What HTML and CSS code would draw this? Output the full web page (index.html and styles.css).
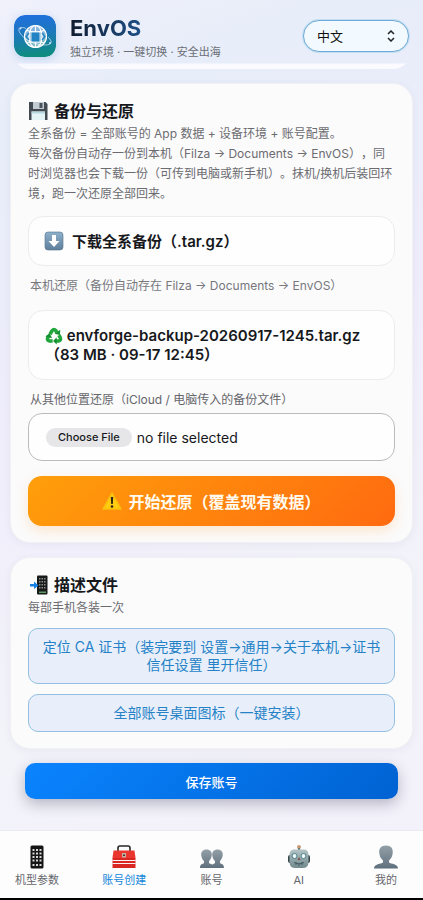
FILE: index.html
```html
<!DOCTYPE html>
<html lang="zh-CN">
<head>
  <meta charset="UTF-8">
  <meta name="viewport" content="width=device-width, initial-scale=1.0">
  <title>EnvOS</title>
  <link rel="stylesheet" href="styles.css">
</head>
<body>
  <header class="topbar">
    <svg class="logo" viewBox="0 0 42 42" aria-hidden="true">
      <defs>
        <linearGradient id="logoBg" x1="0" y1="0" x2="0.1" y2="1">
          <stop offset="0" stop-color="#1f6fe0"/>
          <stop offset="0.5" stop-color="#1c78ba"/>
          <stop offset="1" stop-color="#0f8c80"/>
        </linearGradient>
      </defs>
      <rect width="42" height="42" rx="11" fill="url(#logoBg)"/>
      <circle cx="21.5" cy="21.5" r="11" fill="#fff" fill-opacity="0.45" stroke="#fff" stroke-width="1.2"/>
      <g fill="none" stroke="#fff" stroke-width="1.2">
        <ellipse cx="21.5" cy="21.5" rx="6.500" ry="11"/>
        <path d="M21.500 10.500v22M13 15.500q8.500 3 17 0M13 28q8.500-3 17 0"/>
        <path d="M17 17h9v10h-9z" fill="#2182c4" stroke-width="0.800"/>
        <path d="M15 18l-3 3.500 3 3.500M28 18l3 3.500-3 3.500" stroke="#2182c4"/>
        <path d="M12 13.500C6 11 3 13 6 18c4 7 15 12 25 12 7 0 8-3 3-8" stroke-width="0.600"/>
      </g>
      <circle cx="6.500" cy="13.500" r="1" fill="#bfe4ff"/>
      <circle cx="36" cy="28" r="1" fill="#bfe4ff"/>
    </svg>
    <div class="brand">
      <h1 class="brand-name">EnvOS</h1>
      <p class="brand-sub">独立环境 · 一键切换 · 安全出海</p>
    </div>
    <div class="lang">
      <select class="lang-select" aria-label="语言">
        <option>中文</option>
      </select>
      <svg class="lang-arrow" viewBox="0 0 8 12" aria-hidden="true">
        <path d="M1 4l3-3 3 3M1 8l3 3 3-3"/>
      </svg>
    </div>
  </header>

  <main class="content">
    <section class="card">
      <h2 class="card-title">
        <svg class="icon" viewBox="0 0 20 20" aria-hidden="true">
          <path d="M1 1h16.500L19.500 3v16H1z" fill="#434a52"/>
          <path d="M5 1h11v7H5z" fill="#c3ccd2"/>
          <path d="M11.500 2h3v5h-3z" fill="#4a535b"/>
          <path d="M3.500 10.500h13.500V19H3.500z" fill="#e4f3f6"/>
          <path d="M3.500 10.500h13.500v2H3.500z" fill="#b5d7df"/>
        </svg>
        备份与还原
      </h2>
      <p class="desc">全系备份 = 全部账号的 App 数据 + 设备环境 + 账号配置。<br>每次备份自动存一份到本机（Filza → Documents → EnvOS），同时浏览器也会下载一份（可传到电脑或新手机）。抹机/换机后装回环境，跑一次还原全部回来。</p>

      <button class="btn-plain btn-download" type="button">
        <svg class="icon" viewBox="0 0 20 20" aria-hidden="true">
          <defs>
            <linearGradient id="downBg" x1="0" y1="0" x2="0" y2="1">
              <stop offset="0" stop-color="#8db0cb"/>
              <stop offset="1" stop-color="#5e7f9c"/>
            </linearGradient>
          </defs>
          <rect x="1" y="1" width="18" height="18" rx="3" fill="url(#downBg)" stroke="#56728b" stroke-width="0.600"/>
          <path d="M8 4h4v6h3.500L10 16l-5.500-6H8z" fill="#fff"/>
        </svg>
        <span>下载全系备份（.tar.gz）</span>
      </button>

      <p class="label">本机还原（备份自动存在 Filza → Documents → EnvOS）</p>

      <button class="btn-plain btn-backup" type="button">
        <svg class="icon-inline" viewBox="0 0 20 20" aria-hidden="true">
          <g fill="none" stroke="#20a63a" stroke-width="4">
            <path d="M5.500 8L8 4q2-2.500 4 0l1 2"/>
            <path d="M15.500 9l1.500 3q1 3-2 3.500h-3"/>
            <path d="M8.500 15.500H5q-3-0.500-2-3.500l1-2"/>
          </g>
          <path d="M10.500 7.500l6 1.500L17 3z" fill="#149030"/>
          <path d="M13 11.500v8l-4-4z" fill="#149030"/>
          <path d="M0.500 10.500L5 7l3 5.500z" fill="#149030"/>
        </svg>
        envforge-backup-20260917-1245.tar.gz（83 MB · 09-17 12:45）
      </button>

      <label class="label label-file" for="backup-file">从其他位置还原（iCloud / 电脑传入的备份文件）</label>
      <div class="file-box">
        <input class="file-input" type="file" id="backup-file">
        <span class="file-btn">Choose File</span>
        <span class="file-name">no file selected</span>
      </div>

      <button class="btn-restore" type="button">
        <svg class="icon" viewBox="0 0 20 20" aria-hidden="true">
          <path d="M10 2L19 18H1z" fill="#ffcc12" stroke="#fbbd0d" stroke-width="1.500" stroke-linejoin="round"/>
          <path d="M8.800 6h2.400l-0.400 7H9.200z" fill="#2b2413"/>
          <circle cx="10" cy="15.500" r="1.300" fill="#2b2413"/>
        </svg>
        <span>开始还原（覆盖现有数据）</span>
      </button>
    </section>

    <section class="card card-profile">
      <h2 class="card-title">
        <svg class="icon" viewBox="0 0 20 20" aria-hidden="true">
          <rect x="9" y="0.500" width="10.500" height="19" rx="1" fill="#17191b"/>
          <g fill="#8d8f84">
            <path d="M11 3h1.500v1.500H11zM13.500 3H15v1.500h-1.500zM16 3h1.500v1.500H16z"/>
            <path d="M11 6h1.500v1.500H11zM13.500 6H15v1.500h-1.500zM16 6h1.500v1.500H16z"/>
            <path d="M11 9h1.500v1.500H11zM13.500 9H15v1.500h-1.500zM16 9h1.500v1.500H16z"/>
            <path d="M11 12h1.500v1.500H11zM13.500 12H15v1.500h-1.500zM16 12h1.500v1.500H16z"/>
          </g>
          <path d="M11 16.500h7V18h-7z" fill="#5c9a62"/>
          <path d="M2 9h4V6.500l4.500 4L6 14v-2.500H2z" fill="#1682e6"/>
        </svg>
        描述文件
      </h2>
      <p class="desc">每部手机各装一次</p>
      <a class="link-btn" href="#cert">定位 CA 证书（装完要到 设置→通用→关于本机→证书信任设置 里开信任）</a>
      <a class="link-btn" href="#icons">全部账号桌面图标（一键安装）</a>
    </section>

    <button class="btn-save" type="button">保存账号</button>
  </main>

  <nav class="tabbar">
    <a class="tab" href="#device">
      <svg class="tab-icon" viewBox="0 0 24 24" aria-hidden="true">
        <rect x="5.500" y="0.500" width="13" height="23" rx="1.500" fill="#151515"/>
        <g fill="#d7d7d7">
          <path d="M7.500 4h2v2h-2zM11 4h2v2h-2zM14.500 4h2v2h-2z"/>
          <path d="M7.500 7.500h2v2h-2zM11 7.500h2v2h-2zM14.500 7.500h2v2h-2z"/>
          <path d="M7.500 11h2v2h-2zM11 11h2v2h-2zM14.500 11h2v2h-2z"/>
          <path d="M7.500 14.500h2v2h-2zM11 14.500h2v2h-2zM14.500 14.500h2v2h-2z"/>
          <path d="M7.500 19h2v2h-2zM11 19h2v2h-2zM14.500 19h2v2h-2z"/>
        </g>
      </svg>
      <span>机型参数</span>
    </a>
    <a class="tab tab-active" href="#create">
      <svg class="tab-icon" viewBox="0 0 24 24" aria-hidden="true">
        <path d="M6 6V3q0-2 2-2h8q2 0 2 2v3" fill="none" stroke="#272727" stroke-width="1.600"/>
        <path d="M1.500 5.500h21l1 7.500H0.500z" fill="#e9372f"/>
        <path d="M0.500 13h23v10H0.500z" fill="#d92823"/>
        <path d="M0.500 15.500h23M0.500 18.500h23" stroke="#fff1ee" stroke-width="1"/>
        <rect x="10" y="8" width="4" height="4.500" fill="#c9b0a4"/>
        <path d="M11 9.500h2v1.500h-2z" fill="#4e302c"/>
      </svg>
      <span>账号创建</span>
    </a>
    <a class="tab" href="#accounts">
      <svg class="tab-icon" viewBox="0 0 24 24" aria-hidden="true">
        <defs>
          <linearGradient id="person" x1="0" y1="0" x2="0" y2="1">
            <stop offset="0" stop-color="#94a0a8"/>
            <stop offset="1" stop-color="#5f707d"/>
          </linearGradient>
        </defs>
        <path d="M17.500 4.500c3.800 0 5.700 2.400 5.200 6-.4 2.600-1.600 4.500-2.700 5.500v2c1.500 1.200 4 .8 4 5H11.500c0-4.200 2-3.800 3.500-5v-2c-1.500-1-2.300-2.900-2.700-5.500-.5-3.600 1.400-6 5.200-6z" fill="url(#person)"/>
        <path d="M6.500 4.500c3.800 0 5.700 2.400 5.200 6C11.300 13.100 10.500 15 9 16v2c1.500 1.200 4.500.8 4.500 5H0c0-4.200 2.500-3.800 4-5v-2c-1.500-1-2.300-2.900-2.700-5.500-.5-3.600 1.400-6 5.200-6z" fill="url(#person)"/>
      </svg>
      <span>账号</span>
    </a>
    <a class="tab" href="#ai">
      <svg class="tab-icon" viewBox="0 0 24 24" aria-hidden="true">
        <defs>
          <linearGradient id="robot" x1="0" y1="0" x2="0" y2="1">
            <stop offset="0" stop-color="#b3c3c5"/>
            <stop offset="1" stop-color="#71898d"/>
          </linearGradient>
        </defs>
        <circle cx="12" cy="2" r="2" fill="#c99a78"/>
        <path d="M11 3h2v3h-2z" fill="#69777b"/>
        <rect x="1" y="10" width="22" height="8" rx="2" fill="#35464a"/>
        <path d="M7 4.500h10q4 0 4.500 5V17q0 6-6 6h-7q-6 0-6-6V9.500q.5-5 4.500-5z" fill="url(#robot)"/>
        <circle cx="7.500" cy="11" r="2.500" fill="#effafa" stroke="#4c7d89"/>
        <circle cx="16.500" cy="11" r="2.500" fill="#effafa" stroke="#4c7d89"/>
        <path d="M12 12l1.500 3h-3z" fill="#7d4f49"/>
        <path d="M7 17.500q5 3 10 0M9 17v3M12 18v3M15 17v3" fill="none" stroke="#435b60"/>
      </svg>
      <span>AI</span>
    </a>
    <a class="tab" href="#me">
      <svg class="tab-icon" viewBox="0 0 24 24" aria-hidden="true">
        <path d="M12 .5c5 0 7.300 3 6.700 7.500-.4 3.500-1.700 5.700-3.700 7.500v2c2 1.500 9 1.300 9 6H0c0-4.700 7-4.500 9-6v-2C7 13.700 5.700 11.500 5.300 8 4.700 3.500 7 .5 12 .5z" fill="url(#person)"/>
      </svg>
      <span>我的</span>
    </a>
  </nav>
</body>
</html>
```
FILE: styles.css
```css
* {
  box-sizing: border-box;
}

body {
  margin: 0;
  min-height: 100vh;
  display: flex;
  flex-direction: column;
  font-family: Inter, "Noto Sans CJK SC", sans-serif;
  text-spacing-trim: space-all;
  color: #16181c;
  background: linear-gradient(160deg, #f0f1fb, #e7edf9 12%, #efedfb 40%, #f3f3fa 70%, #f3f1fb);
}

h1, h2, p {
  margin: 0;
}

button, select {
  font-family: inherit;
}

.topbar {
  display: flex;
  align-items: center;
  gap: 14px;
  height: 69px;
  margin: 0 12px;
  padding: 8px 2px 5px;
  background: linear-gradient(transparent 63px, #fbfbff 64px);
  border-radius: 0 0 18px 18px;
}

.logo {
  width: 42px;
  height: 42px;
  border-radius: 11px;
  box-shadow: 0 2px 8px rgba(60, 130, 220, 0.25);
}

.brand {
  flex: 1;
  padding-top: 3px;
}

.brand-name {
  font-size: 22px;
  line-height: 28px;
  font-weight: 700;
  width: max-content;
  color: transparent;
  background: linear-gradient(90deg, #101c30, #1d4f86);
  background-clip: text;
}

.brand-sub {
  font-size: 11px;
  line-height: 20px;
  color: #6b6e76;
}

.lang {
  display: grid;
  align-items: center;
  width: 106px;
}

.lang-select {
  grid-area: 1 / 1;
  height: 32px;
  padding: 0 13px;
  font-size: 13px;
  color: #111;
  appearance: none;
  background: #f3faff;
  border: 1px solid #70a9d4;
  border-radius: 16px;
  box-shadow: 0 0 0 1px #c3dff2;
}

.lang-arrow {
  grid-area: 1 / 1;
  justify-self: end;
  width: 8px;
  height: 12px;
  margin-right: 14px;
  fill: none;
  stroke: #222;
  stroke-width: 1.5;
  pointer-events: none;
}

.content {
  display: flex;
  flex-direction: column;
  gap: 14px;
  padding: 14px 10px 0;
}

.card {
  display: flex;
  flex-direction: column;
  padding: 15px 17px 16px;
  background: #fbfbfc;
  border: 1px solid #f1f1f5;
  border-radius: 20px;
  box-shadow: 0 2px 8px rgba(60, 60, 100, 0.06);
}

.card-title {
  display: flex;
  align-items: center;
  gap: 6px;
  font-size: 16px;
  line-height: 24px;
  font-weight: 700;
}

.icon {
  width: 20px;
  height: 20px;
  flex: none;
}

.desc {
  margin-top: 1px;
  font-size: 12px;
  line-height: 20px;
  color: #6b6b70;
}

.btn-plain {
  color: #16181c;
  font-size: 15px;
  line-height: 19px;
  font-weight: 600;
  text-align: left;
  background: #fefefe;
  border: 1px solid #ececef;
  border-radius: 15px;
  cursor: pointer;
}

.btn-download {
  display: flex;
  align-items: center;
  gap: 8px;
  height: 50px;
  margin-top: 12px;
  padding: 0 15px;
}

.btn-backup {
  margin-top: 14px;
  padding: 15px 16px;
}

.icon-inline {
  width: 18px;
  height: 18px;
  vertical-align: -4px;
}

.label {
  margin-top: 10px;
  padding-left: 2px;
  font-size: 12px;
  line-height: 20px;
  color: #77777c;
}

.label-file {
  color: #66666b;
}

.file-box {
  position: relative;
  display: flex;
  align-items: center;
  gap: 5px;
  height: 48px;
  margin-top: 3px;
  padding: 0 17px;
  background: #fefefe;
  border: 1px solid #bcbcbf;
  border-radius: 14px;
}

/* real input covers the whole box */
.file-input {
  position: absolute;
  inset: 0;
  width: 100%;
  height: 100%;
  opacity: 0;
  cursor: pointer;
}

.file-btn {
  padding: 0 12px;
  font-size: 11px;
  line-height: 19px;
  font-weight: 500;
  background: #e6e6e8;
  border-radius: 10px;
}

.file-name {
  font-size: 14px;
}

.btn-restore {
  display: flex;
  align-items: center;
  justify-content: center;
  gap: 6px;
  height: 50px;
  margin-top: 15px;
  font-size: 16px;
  font-weight: 700;
  color: #fffbee;
  background: linear-gradient(135deg, #ff9f0a, #ff6a10);
  border: none;
  border-radius: 14px;
  box-shadow: 0 5px 14px rgba(255, 150, 30, 0.2);
  cursor: pointer;
}

.link-btn {
  margin-top: 10px;
  padding: 9px 12px;
  font-size: 14px;
  line-height: 18px;
  text-align: center;
  text-decoration: none;
  color: #2582c6;
  background: #e8effb;
  border: 1px solid #92bfe2;
  border-radius: 10px;
}

.btn-save {
  height: 36px;
  margin: 0 15px;
  font-size: 13px;
  font-weight: 500;
  color: #fff;
  background: linear-gradient(135deg, #0a84ff, #0062d2);
  border: none;
  border-radius: 10px;
  box-shadow: 0 5px 14px rgba(40, 40, 70, 0.3);
  cursor: pointer;
}

.tabbar {
  display: flex;
  justify-content: space-between;
  margin-top: auto;
  padding: 14px 14px 9px;
  background: #fdfdfe;
  border-top: 1px solid #e9e9ef;
  border-bottom: 2px solid #000;
}

.tab {
  display: flex;
  flex-direction: column;
  align-items: center;
  gap: 2px;
  width: 46px;
  font-size: 11px;
  line-height: 18px;
  text-decoration: none;
  color: #66666a;
}

.tab-icon {
  width: 24px;
  height: 24px;
}

.tab-active {
  color: #1687d9;
}
```
